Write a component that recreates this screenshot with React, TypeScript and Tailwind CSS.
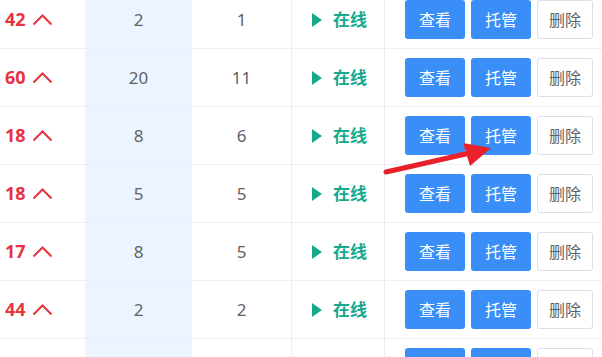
import React from 'react';

type Row = { score: number; a: number; b: number };

const rows: Row[] = [
  { score: 42, a: 2, b: 1 },
  { score: 60, a: 20, b: 11 },
  { score: 18, a: 8, b: 6 },
  { score: 18, a: 5, b: 5 },
  { score: 17, a: 8, b: 5 },
  { score: 44, a: 2, b: 2 },
  { score: 30, a: 3, b: 3 },
];

const font = { fontFamily: '"Noto Sans", "Noto Sans CJK SC", sans-serif' };

function ChevronUp() {
  return (
    <svg width="21" height="13" viewBox="0 0 21 13" className="ml-[6px]">
      <path d="M1.5 11.5 L10.5 2.5 L19.5 11.5" fill="none" stroke="#e8323f" strokeWidth="2" />
    </svg>
  );
}

export default function App() {
  return (
    <div className="relative w-[602px] h-[357px] overflow-hidden bg-white" style={font}>
      <div className="mt-[-9px]">
        {rows.map((row, i) => (
          <div key={i} className="flex h-[58px] border-b border-[#ebeef5]">
            <div className="w-[85px] flex items-center pl-[5px] text-[18px] font-bold text-[#e8323f]">
              {row.score}
              <ChevronUp />
            </div>
            <div className="w-[107px] flex items-center justify-center bg-[#ecf4ff] text-[17px] text-[#606266]">
              {row.a}
            </div>
            <div className="w-[100px] flex items-center justify-center border-r border-[#ebeef5] text-[17px] text-[#606266]">
              {row.b}
            </div>
            <div className="w-[93px] flex items-center pl-[20px] border-r border-[#ebeef5] text-[17px] font-bold text-[#17a98b]">
              <svg width="10" height="14" viewBox="0 0 10 14" className="mr-[11px]">
                <path d="M0 0 L10 7 L0 14 Z" fill="#17a98b" />
              </svg>
              在线
            </div>
            <div className="flex-1 flex items-center pl-[20px] gap-[6px] text-[16px]">
              <button className="w-[60px] h-[39px] rounded-[3px] bg-[#3a8ef7] text-white">查看</button>
              <button className="w-[60px] h-[39px] rounded-[3px] bg-[#3a8ef7] text-white">托管</button>
              <button className="w-[56px] h-[39px] rounded-[3px] border border-[#dcdfe6] bg-white text-[#606266]">删除</button>
            </div>
          </div>
        ))}
      </div>
      <svg className="absolute left-0 top-0" width="602" height="357" viewBox="0 0 602 357">
        <path d="M386 172 L470 153" stroke="#e8212b" strokeWidth="5" strokeLinecap="round" />
        <path d="M491 148 L463 143 L470 166 Z" fill="#e8212b" />
      </svg>
    </div>
  );
}
